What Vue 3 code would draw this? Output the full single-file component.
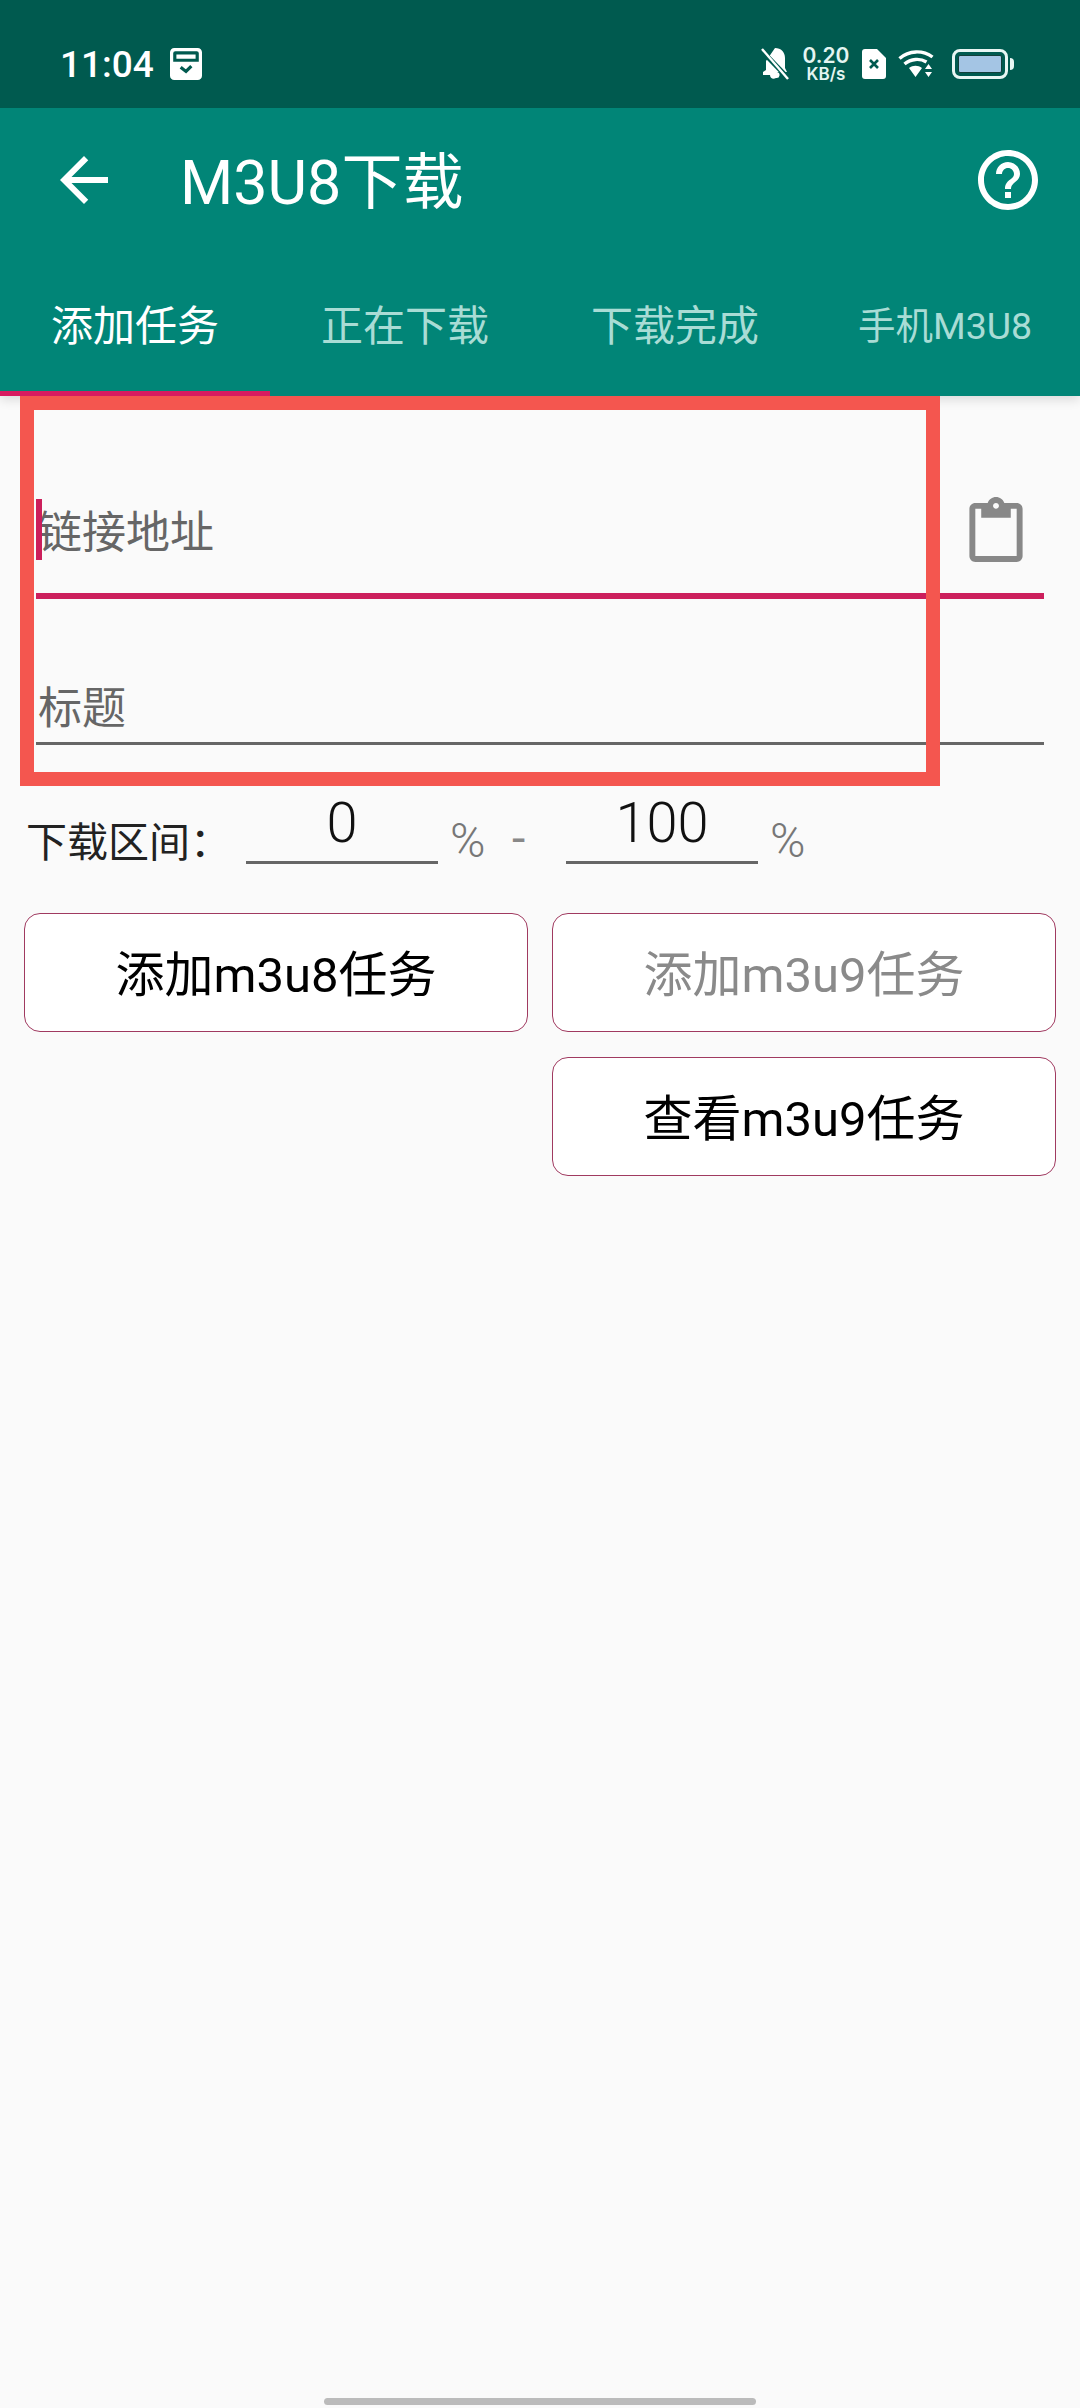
<template>
  <div class="page">
    <header class="head">
      <div class="status">
        <span class="time">11:04</span>
        <svg class="cal" viewBox="0 0 30 30">
          <path fill="#fff" fill-rule="evenodd" d="M4 0h22a4 4 0 0 1 4 4v22a4 4 0 0 1-4 4H4a4 4 0 0 1-4-4V4a4 4 0 0 1 4-4zM5 3a2 2 0 0 0-2 2v8h24V5a2 2 0 0 0-2-2zM6 6h18v4H6z" />
          <path fill="none" stroke="#005a4f" stroke-width="3" d="M10 18l5 4 5-5" />
        </svg>
        <div class="status-right">
          <svg class="bell" viewBox="0 0 28 32">
            <path fill="#fff" d="M14 0c6 0 10 4 10 10v10l2 4H16a3 3 0 0 1-1 6c-3 2-6 0-6-3H2v-3l3-2v-9z" />
            <path fill="none" stroke="#005a4f" stroke-width="5" d="M0 2l27 28" />
            <path fill="none" stroke="#fff" stroke-width="2.4" d="M1 1l26 30" />
          </svg>
          <div class="speed">
            <span class="speed-num">0.20</span>
            <span class="speed-unit">KB/s</span>
          </div>
          <svg class="sim" viewBox="0 0 24 30">
            <path fill="#fff" d="M3 0h12l9 9v18a3 3 0 0 1-3 3H3a3 3 0 0 1-3-3V3a3 3 0 0 1 3-3z" />
            <path fill="none" stroke="#005a4f" stroke-width="2.6" d="M8 11l8 8M16 11l-8 8" />
          </svg>
          <svg class="wifi" viewBox="0 0 38 28">
            <g fill="none" stroke="#fff" stroke-width="3.4">
              <path d="M1.5 8.5C11 0 25 0 34.500 7" />
              <path d="M6.500 14C13 8.500 22 8 28.500 12" />
            </g>
            <path fill="#fff" d="M11 18c4-3 9-3 13 0l-6.500 9zM27 19l3.500-5 3.500 5zM27 22h7l-3.500 5z" />
          </svg>
          <div class="battery">
            <div class="battery-body"><div class="battery-fill"></div></div>
            <div class="battery-cap"></div>
          </div>
        </div>
      </div>

      <div class="bar">
        <svg class="back" viewBox="0 0 24 24">
          <path fill="#fff" d="M20 11H7.830l5.590-5.590L12 4l-8 8 8 8 1.410-1.410L7.830 13H20v-2z" />
        </svg>
        <span class="title">M3U8下载</span>
        <svg class="help" viewBox="0 0 24 24">
          <path fill="#fff" d="M11 18h2v-2h-2v2zm1-16C6.480 2 2 6.480 2 12s4.480 10 10 10 10-4.480 10-10S17.520 2 12 2zm0 18c-4.410 0-8-3.590-8-8s3.590-8 8-8 8 3.590 8 8-3.590 8-8 8zm0-14c-2.210 0-4 1.790-4 4h2c0-1.100.9-2 2-2s2 .9 2 2c0 2-3 1.750-3 5h2c0-2.250 3-2.500 3-5 0-2.210-1.790-4-4-4z" />
        </svg>
      </div>

      <div class="tabs">
        <div
          v-for="(tab, index) in tabs"
          :key="tab"
          class="tab"
          :class="{ active: index === 0, small: index === 3 }"
        >{{ tab }}</div>
      </div>
    </header>

    <main class="content">
      <!-- 红色标注框 -->
      <div class="mark"></div>

      <div class="form">
        <div class="field focus">
          <span class="cursor"></span>
          <span class="hint">链接地址</span>
          <svg class="paste" viewBox="3 0 18 22">
            <path fill="#888" d="M19 2h-4.180C14.400.84 13.300 0 12 0c-1.300 0-2.400.84-2.820 2H5c-1.100 0-2 .9-2 2v16c0 1.100.9 2 2 2h14c1.100 0 2-.9 2-2V4c0-1.100-.9-2-2-2zm-7 0c.55 0 1 .45 1 1s-.45 1-1 1-1-.45-1-1 .45-1 1-1zm7 18H5V4h2v3h10V4h2v16z" />
          </svg>
        </div>
        <div class="field plain">
          <span class="hint">标题</span>
        </div>
      </div>

      <div class="range">
        <span class="range-label">下载区间：</span>
        <span class="num">0</span>
        <span class="pct">%</span>
        <span class="dash">-</span>
        <span class="num">100</span>
        <span class="pct">%</span>
      </div>

      <div class="actions">
        <button class="btn">添加m3u8任务</button>
        <button class="btn off">添加m3u9任务</button>
        <button class="btn second">查看m3u9任务</button>
      </div>
    </main>

    <div class="home"></div>
  </div>
</template>

<script setup>
const tabs = ['添加任务', '正在下载', '下载完成', '手机M3U8']
</script>

<style>
html, body {
  margin: 0;
  background: #fafafa;
}
</style>

<style scoped>
.page {
  position: relative;
  width: 1080px;
  height: 2408px;
  overflow: hidden;
  background: #fafafa;
  font-family: Roboto, "Noto Sans CJK SC", sans-serif;
}

.head {
  background: #018577;
  box-shadow: 0 4px 10px rgba(0, 0, 0, 0.12);
}

.status {
  height: 108px;
  box-sizing: border-box;
  padding: 22px 66px 0 60px;
  display: flex;
  align-items: center;
  background: #005a4f;
  color: #fff;
}

.time {
  font-size: 37px;
  font-weight: 500;
  margin-top: -2px;
}

.cal {
  width: 32px;
  height: 32px;
  margin-left: 16px;
  margin-top: -3px;
}

.status-right {
  margin-left: auto;
  display: flex;
  align-items: center;
  margin-top: -2px;
}

.bell {
  width: 28px;
  height: 32px;
}

.speed {
  width: 48px;
  margin-left: 13px;
  display: flex;
  flex-direction: column;
  align-items: center;
  font-family: Inter, sans-serif;
  font-weight: 600;
  color: #e4f5f1;
}

.speed-num {
  font-size: 21px;
  line-height: 20px;
}

.speed-unit {
  font-size: 17px;
  line-height: 16px;
}

.sim {
  width: 24px;
  height: 30px;
  margin-left: 12px;
}

.wifi {
  width: 38px;
  height: 28px;
  margin-left: 12px;
}

.battery {
  display: flex;
  align-items: center;
  margin-left: 16px;
}

.battery-body {
  width: 56px;
  height: 30px;
  box-sizing: border-box;
  padding: 3px;
  border: 3px solid #e8f6f3;
  border-radius: 8px;
}

.battery-fill {
  height: 100%;
  background: #a4c5e4;
  border: 1px solid #123f3a;
  border-radius: 2px;
  box-sizing: border-box;
}

.battery-cap {
  width: 4px;
  height: 12px;
  margin-left: 2px;
  background: #e8f6f3;
  border-radius: 0 4px 4px 0;
}

.bar {
  height: 144px;
  display: flex;
  align-items: center;
  color: #fff;
}

.back {
  width: 72px;
  height: 72px;
  margin-left: 48px;
}

.title {
  margin-left: 60px;
  margin-top: -5px;
  font-size: 61px;
}

.help {
  width: 72px;
  height: 72px;
  margin-left: auto;
  margin-right: 36px;
}

.tabs {
  display: flex;
  height: 144px;
}

.tab {
  flex: 0 0 270px;
  box-sizing: border-box;
  height: 144px;
  padding-top: 36px;
  padding-bottom: 34px;
  display: flex;
  align-items: center;
  justify-content: center;
  font-size: 42px;
  color: #a9dcd5;
  border-bottom: 5px solid transparent;
}

.tab.active {
  color: #fff;
  border-bottom-color: #d81b60;
}

.tab.small {
  font-size: 37.5px;
}

.content {
  position: relative;
}

.mark {
  position: absolute;
  left: 20px;
  top: 0;
  width: 920px;
  height: 390px;
  box-sizing: border-box;
  border: 14px solid #f4564f;
  z-index: 2;
  pointer-events: none;
}

.form {
  padding: 0 36px;
}

.field {
  position: relative;
  display: flex;
  align-items: center;
  box-sizing: border-box;
}

.field.focus {
  height: 203px;
  padding-top: 99px;
  padding-bottom: 30px;
  border-bottom: 6px solid #cc1f5c;
}

.field.plain {
  height: 146px;
  padding-top: 88px;
  padding-bottom: 19px;
  border-bottom: 3px solid #666;
}

.hint {
  font-size: 44px;
  color: #666;
  margin-left: 2px;
}

.cursor {
  position: absolute;
  left: 0;
  top: 103px;
  width: 6px;
  height: 61px;
  background: #cc1f5c;
}

.paste {
  position: absolute;
  right: 21px;
  top: 101px;
  width: 54px;
  height: 65px;
}

.range {
  display: flex;
  height: 122px;
  padding-left: 26px;
  align-items: flex-start;
}

.range-label {
  width: 220px;
  margin-top: 74px;
  font-size: 41px;
  line-height: 48px;
  color: #222;
}

.num {
  flex: none;
  width: 192px;
  height: 119px;
  box-sizing: border-box;
  border-bottom: 3px solid #666;
  text-align: center;
  font-size: 56px;
  font-weight: 300;
  line-height: 66px;
  padding-top: 45px;
  color: #111;
}

.pct {
  flex: none;
  width: 36px;
  margin-left: 12px;
  margin-top: 68px;
  font-size: 48px;
  font-weight: 300;
  line-height: 56px;
  color: #777;
}

.dash {
  flex: none;
  width: 54px;
  margin-left: 26px;
  margin-top: 66px;
  font-size: 48px;
  line-height: 56px;
  color: #888;
}

.actions {
  display: grid;
  grid-template-columns: 504px 504px;
  grid-auto-rows: 119px;
  gap: 25px 24px;
  padding: 46px 24px 0;
}

.btn {
  background: #fff;
  border: 1.5px solid #a03a60;
  border-radius: 16px;
  padding: 0 0 4px;
  font-family: inherit;
  font-size: 49px;
  color: #000;
}

.btn.off {
  color: #8a8a8a;
}

.btn.second {
  grid-column: 2;
}

.home {
  position: absolute;
  left: 324px;
  bottom: 3px;
  width: 432px;
  height: 7px;
  border-radius: 4px;
  background: #bbb;
}
</style>
